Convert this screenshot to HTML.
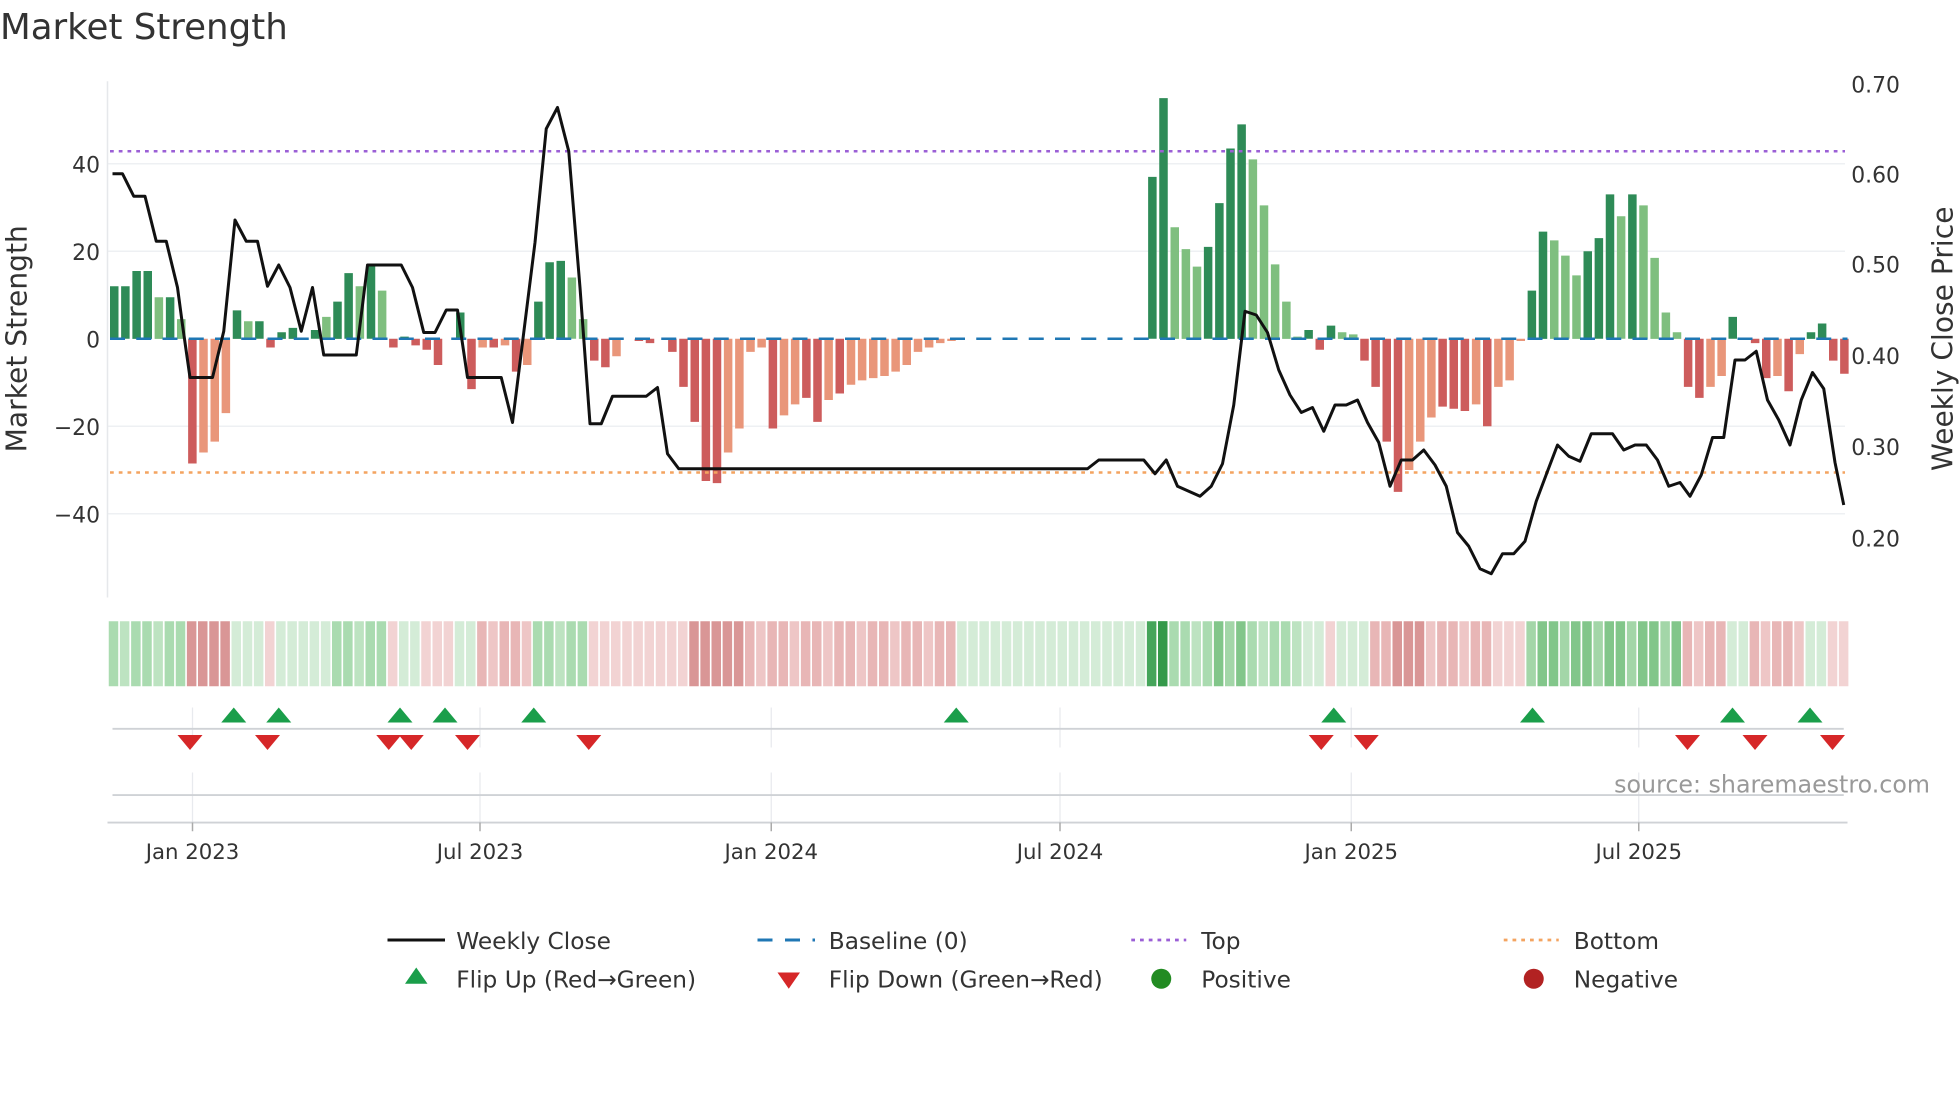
<!DOCTYPE html>
<html><head><meta charset="utf-8">
<style>
html,body{margin:0;padding:0;background:#fff;}
svg{display:block;}
text{font-family:"DejaVu Sans","Liberation Sans",sans-serif;fill:#333;}
</style></head>
<body>
<svg id="s" xmlns="http://www.w3.org/2000/svg" width="1960" height="1102" viewBox="0 0 1568 881.6">
<rect width="1568" height="881.6" fill="#fff"/>
<text x="0" y="31" font-size="28.5">Market Strength</text>
<g stroke="#eef0f3" stroke-width="1.2">
<line x1="86" y1="131" x2="1476" y2="131"/>
<line x1="86" y1="201" x2="1476" y2="201"/>
<line x1="86" y1="341" x2="1476" y2="341"/>
<line x1="86" y1="411" x2="1476" y2="411"/>
</g>
<line x1="86" y1="65" x2="86" y2="478" stroke="#e6e8eb" stroke-width="1.2"/>
<g font-size="17.5" text-anchor="end">
<text x="80" y="138">40</text><text x="80" y="208">20</text><text x="80" y="278">0</text>
<text x="80" y="348">−20</text><text x="80" y="418">−40</text>
</g>
<g font-size="17.5">
<text x="1481" y="74">0.70</text><text x="1481" y="146">0.60</text><text x="1481" y="218">0.50</text>
<text x="1481" y="291">0.40</text><text x="1481" y="364">0.30</text><text x="1481" y="437">0.20</text>
</g>
<text transform="translate(21,271) rotate(-90)" font-size="22.5" text-anchor="middle">Market Strength</text>
<text transform="translate(1562,271) rotate(-90)" font-size="22.5" text-anchor="middle">Weekly Close Price</text>
<g id="bars"></g>
<line x1="88" y1="271" x2="1478" y2="271" stroke="#1f77b4" stroke-width="2" stroke-dasharray="12,9"/>
<line x1="88" y1="121" x2="1476" y2="121" stroke="#9b5fd6" stroke-width="2" stroke-dasharray="3,4"/>
<line x1="88" y1="378" x2="1476" y2="378" stroke="#f4a460" stroke-width="2" stroke-dasharray="3,4"/>
<polyline id="price" fill="none" stroke="#111" stroke-width="2.4" stroke-linejoin="round"/>
<g id="heat"></g>
<g stroke="#e8eaee" stroke-width="1">
<line x1="154" y1="566" x2="154" y2="598"/><line x1="384" y1="566" x2="384" y2="598"/>
<line x1="617" y1="566" x2="617" y2="598"/><line x1="848" y1="566" x2="848" y2="598"/>
<line x1="1081" y1="566" x2="1081" y2="598"/><line x1="1311" y1="566" x2="1311" y2="598"/>
<line x1="154" y1="618" x2="154" y2="658"/><line x1="384" y1="618" x2="384" y2="658"/>
<line x1="617" y1="618" x2="617" y2="658"/><line x1="848" y1="618" x2="848" y2="658"/>
<line x1="1081" y1="618" x2="1081" y2="658"/><line x1="1311" y1="618" x2="1311" y2="658"/>
</g>
<line x1="90" y1="583" x2="1475" y2="583" stroke="#cfd2d6" stroke-width="1.5"/>
<line x1="90" y1="636" x2="1475" y2="636" stroke="#cfd2d6" stroke-width="1.5"/>
<line x1="86" y1="658" x2="1478" y2="658" stroke="#cfd2d6" stroke-width="1.5"/>
<g stroke="#aaa" stroke-width="1.2">
<line x1="154" y1="658" x2="154" y2="665"/><line x1="384" y1="658" x2="384" y2="665"/>
<line x1="617" y1="658" x2="617" y2="665"/><line x1="848" y1="658" x2="848" y2="665"/>
<line x1="1081" y1="658" x2="1081" y2="665"/><line x1="1311" y1="658" x2="1311" y2="665"/>
</g>
<g id="marks"></g>
<text x="1544" y="634" font-size="19" text-anchor="end" style="fill:#999">source: sharemaestro.com</text>
<g font-size="17" text-anchor="middle">
<text x="154" y="687">Jan 2023</text><text x="384" y="687">Jul 2023</text><text x="617" y="687">Jan 2024</text>
<text x="848" y="687">Jul 2024</text><text x="1081" y="687">Jan 2025</text><text x="1311" y="687">Jul 2025</text>
</g>
<g font-size="18.6">
<line x1="310" y1="752" x2="356" y2="752" stroke="#111" stroke-width="2.4"/>
<text x="365" y="759">Weekly Close</text>
<line x1="606" y1="752" x2="652" y2="752" stroke="#1f77b4" stroke-width="2.4" stroke-dasharray="12,10"/>
<text x="663" y="759">Baseline (0)</text>
<line x1="905" y1="752" x2="949" y2="752" stroke="#9b5fd6" stroke-width="2.2" stroke-dasharray="3,4"/>
<text x="961" y="759">Top</text>
<line x1="1203" y1="752" x2="1247" y2="752" stroke="#f4a460" stroke-width="2.2" stroke-dasharray="3,4"/>
<text x="1259" y="759">Bottom</text>
<polygon points="333,774 342,787 324,787" fill="#1a9e4a"/>
<text x="365" y="790">Flip Up (Red→Green)</text>
<polygon points="622,778 640,778 631,791" fill="#d62728"/>
<text x="663" y="790">Flip Down (Green→Red)</text>
<circle cx="929" cy="783" r="8" fill="#228b22"/>
<text x="961" y="790">Positive</text>
<circle cx="1227" cy="783" r="8" fill="#b22222"/>
<text x="1259" y="790">Negative</text>
</g>
</svg>
<script>
var NS="http://www.w3.org/2000/svg";
function el(t,a,p){var e=document.createElementNS(NS,t);for(var k in a)e.setAttribute(k,a[k]);p.appendChild(e);return e;}
var V=[[12,'D'],[12,'D'],[15.5,'D'],[15.5,'D'],[9.5,'L'],[9.5,'D'],[4.5,'L'],[-28.5,'R'],[-26,'S'],[-23.5,'S'],
[-17,'S'],[6.5,'D'],[4,'L'],[4,'D'],[-2,'R'],[1.5,'D'],[2.5,'D'],[0,'L'],[2,'D'],[5,'L'],
[8.5,'D'],[15,'D'],[12,'L'],[17,'D'],[11,'L'],[-2,'R'],[0.5,'D'],[-1.5,'R'],[-2.5,'R'],[-6,'R'],
[0,'L'],[6,'D'],[-11.5,'R'],[-2,'S'],[-2,'R'],[-1.5,'S'],[-7.5,'R'],[-6,'S'],[8.5,'D'],[17.5,'D'],
[17.8,'D'],[14,'L'],[4.5,'L'],[-5,'R'],[-6.5,'R'],[-4,'S'],[0,'L'],[-0.5,'R'],[-1,'R'],[0,'L'],
[-3,'R'],[-11,'R'],[-19,'R'],[-32.5,'R'],[-33,'R'],[-26,'S'],[-20.5,'S'],[-3,'S'],[-2,'S'],[-20.5,'R'],
[-17.5,'S'],[-15,'S'],[-13.5,'R'],[-19,'R'],[-14,'S'],[-12.5,'R'],[-10.5,'S'],[-9.5,'S'],[-9,'S'],[-8.5,'S'],
[-7.5,'S'],[-6,'S'],[-3,'S'],[-2,'S'],[-1,'S'],[-0.5,'S']];
for(var i=76;i<=92;i++)V.push([0,'L']);
V=V.concat([[37,'D'],[55,'D'],[25.5,'L'],[20.5,'L'],[16.5,'L'],[21,'D'],[31,'D'],[43.5,'D'],[49,'D'],[41,'L'],
[30.5,'L'],[17,'L'],[8.5,'L'],[0.5,'L'],[2,'D'],[-2.5,'R'],[3,'D'],[1.5,'L'],[1,'L'],[-5,'R'],
[-11,'R'],[-23.5,'R'],[-35,'R'],[-30,'S'],[-23.5,'S'],[-18,'S'],[-15.5,'R'],[-16,'R'],[-16.5,'R'],[-15,'S'],
[-20,'R'],[-11,'S'],[-9.5,'S'],[-0.5,'S'],[11,'D'],[24.5,'D'],[22.5,'L'],[19,'L'],[14.5,'L'],[20,'D'],
[23,'D'],[33,'D'],[28,'L'],[33,'D'],[30.5,'L'],[18.5,'L'],[6,'L'],[1.5,'L'],[-11,'R'],[-13.5,'R'],
[-11,'S'],[-8.5,'S'],[5,'D'],[0,'L'],[-1,'R'],[-9,'R'],[-8.5,'S'],[-12,'R'],[-3.5,'S'],[1.5,'D'],
[3.5,'D'],[-5,'R'],[-8,'R']]);
var C={D:'#2e8b57',L:'#7fbf7f',R:'#cd5c5c',S:'#e9967a'};
var bars=document.getElementById('bars');
for(var i=0;i<V.length;i++){var v=V[i][0];if(v==0)continue;var x=88+8.93*i;var h=Math.abs(v)*3.5;
el('rect',{x:x.toFixed(1),y:(v>0?271-h:271).toFixed(1),width:6.8,height:h.toFixed(1),fill:C[V[i][1]]},bars);}
var H={G0:'#d4ecd7',G1:'#aadbb0',G2:'#82c68a',G3:'#45a55a',R0:'#f2d3d3',Rm:'#e8b6b6',R1:'#d99696'};
var ranges=[[0,6,'G1'],[7,10,'R1'],[11,13,'G0'],[14,14,'R0'],[15,19,'G0'],[20,24,'G1'],[25,25,'R0'],[26,27,'G0'],[28,30,'R0'],[31,32,'G0'],[33,37,'Rm'],[38,42,'G1'],[43,51,'R0'],[52,56,'R1'],[57,75,'Rm'],[76,92,'G0'],[93,94,'G3'],[95,98,'G1'],[99,101,'G2'],[102,106,'G1'],[107,108,'G0'],[109,109,'R0'],[110,112,'G0'],[113,114,'Rm'],[115,117,'R1'],[118,123,'Rm'],[124,126,'R0'],[127,140,'G2'],[141,144,'Rm'],[145,146,'G0'],[147,151,'Rm'],[152,153,'G0'],[154,155,'R0']];
var heat=document.getElementById('heat');
ranges.forEach(function(r){for(var i=r[0];i<=r[1];i++){var c=H[r[2]];
if((r[2]=='G1'||r[2]=='Rm'||r[2]=='G2')&&i%3==1)c=(r[2]=='Rm')?'#eec6c6':(r[2]=='G1'?'#bde3c1':'#a3d6a8');
el('rect',{x:(87+8.93*i).toFixed(1),y:497,width:7.6,height:52,fill:c},heat);}});
el('rect',{x:(87+8.93*94).toFixed(1),y:497,width:7.6,height:52,fill:'#34994a'},heat);
var P=[[90,139],[98,139],[107,157],[116,157],[125,193],[133,193],[142,230],[146,260],[152,302],[170,302],[179,265],[188,176],[197,193],[206,193],[214,229],[223,212],[232,230],[241,265],[250,230],[259,284],[285,284],[294,212],[321,212],[330,230],[339,266],[348,266],[357,248],[366,248],[374,302],[401,302],[410,338],[419,266],[428,194],[437,103],[446,86],[455,121],[464,230],[472,339],[481,339],[490,317],[517,317],[526,310],[534,363],[543,375],[870,375],[879,368],[915,368],[924,379],[933,368],[942,389],[960,397],[969,389],[978,371],[987,324],[996,249],[1005,252],[1014,266],[1023,296],[1032,316],[1041,330],[1050,326],[1059,345],[1068,324],[1077,324],[1086,320],[1094,338],[1103,354],[1112,389],[1121,368],[1130,368],[1139,360],[1148,372],[1157,389],[1166,426],[1175,437],[1184,455],[1193,459],[1202,443],[1211,443],[1220,433],[1229,401],[1238,377],[1246,356],[1255,365],[1264,369],[1273,347],[1290,347],[1299,360],[1308,356],[1317,356],[1326,368],[1335,389],[1344,386],[1352,397],[1361,380],[1370,350],[1379,350],[1388,288],[1396,288],[1405,281],[1414,320],[1423,336],[1432,356],[1441,320],[1450,298],[1459,311],[1468,370],[1475,404]];
document.getElementById('price').setAttribute('points',P.map(function(p){return p[0]+','+p[1];}).join(' '));
var marks=document.getElementById('marks');
[187,223,320,356,427,765,1067,1226,1386,1448].forEach(function(x){el('polygon',{points:x+',566 '+(x+10)+',578 '+(x-10)+',578',fill:'#1a9e4a'},marks);});
[152,214,311,329,374,471,1057,1093,1350,1404,1466].forEach(function(x){el('polygon',{points:(x-10)+',588 '+(x+10)+',588 '+x+',600',fill:'#d62728'},marks);});
</script>
</body></html>
